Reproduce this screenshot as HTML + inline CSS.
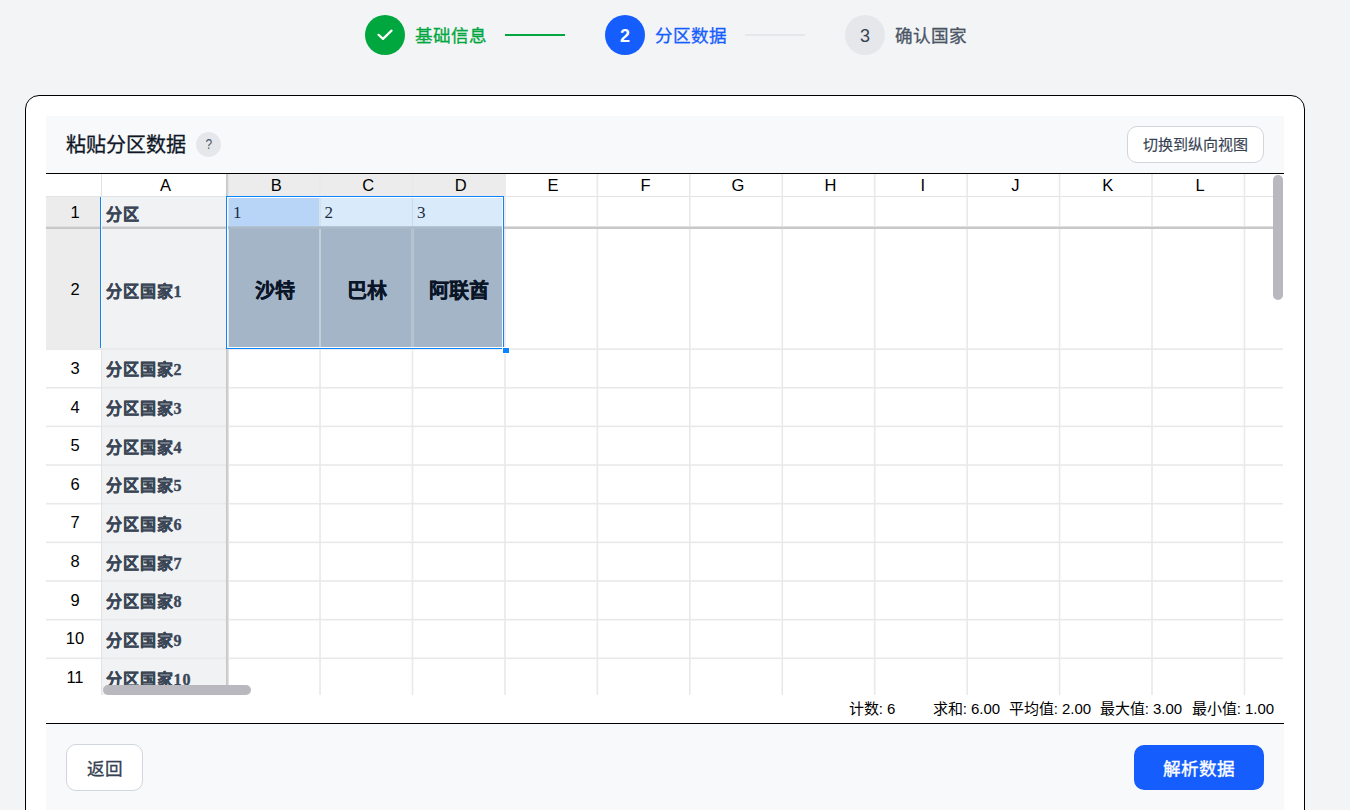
<!DOCTYPE html>
<html lang="zh-CN">
<head>
<meta charset="utf-8">
<style>
*{box-sizing:border-box;margin:0;padding:0}
html,body{width:1350px;height:810px;overflow:hidden;background:#f3f4f6;font-family:"Liberation Sans",sans-serif}
.abs{position:absolute}
.circle{position:absolute;width:40px;height:40px;border-radius:50%;top:15px;display:flex;align-items:center;justify-content:center;font-size:18px;font-weight:bold;padding-top:2px}
.steptxt{position:absolute;top:24px;font-size:17.6px;line-height:24px;white-space:nowrap;-webkit-text-stroke:0.3px currentColor}
.card{position:absolute;left:25px;top:95px;width:1280px;height:760px;border:1px solid #000;border-radius:14px;background:#fff}
.panel{position:absolute;left:46px;top:116px;width:1238px;height:57px;background:#f8f9fa}
.btn{position:absolute;background:#fff;border:1px solid #d1d5dc;border-radius:10px;color:#364153;display:flex;align-items:center;justify-content:center;white-space:nowrap}
.sheettxt{position:absolute;left:0;top:0;width:1350px;height:810px;clip-path:inset(174px 67px 115px 46px)}
.t{position:absolute;white-space:nowrap}
.ch{position:absolute;top:174px;height:22px;font-size:16.5px;line-height:22px;text-align:center;color:#000;padding-left:5px}
.rh{position:absolute;left:48px;width:54px;padding-top:1px;font-size:16.5px;text-align:center;color:#000;display:flex;align-items:center;justify-content:center}
.ca{position:absolute;left:106px;font-family:"Liberation Serif",serif;font-weight:bold;font-size:16px;color:#3a4555;-webkit-text-stroke:0.38px #3a4555;padding-top:2px;letter-spacing:0.9px;white-space:nowrap;display:flex;align-items:center}
.num{position:absolute;font-family:"Liberation Serif",serif;font-size:17px;color:#1a2a40;display:flex;align-items:center;padding-top:2px}
.big{position:absolute;font-family:"Liberation Sans",sans-serif;font-weight:bold;font-size:20px;color:#0a1628;-webkit-text-stroke:0.32px #0a1628;display:flex;align-items:center;justify-content:center}
.st{position:absolute;top:699px;font-size:15px;line-height:20px;color:#000;white-space:nowrap}
</style>
</head>
<body>
<!-- stepper -->
<div class="circle" style="left:365px;background:#00a63e">
<svg width="16" height="16" viewBox="0 0 16 16"><path d="M1.5 6.8 L6 10.9 L14.5 2.6" fill="none" stroke="#fff" stroke-width="2.2" stroke-linecap="round" stroke-linejoin="round"/></svg>
</div>
<div class="steptxt" style="left:415px;color:#00a63e">基础信息</div>
<div class="abs" style="left:505px;top:34px;width:60px;height:2px;background:#00a63e"></div>
<div class="circle" style="left:605px;background:#155dfc;color:#fff">2</div>
<div class="steptxt" style="left:655px;color:#155dfc">分区数据</div>
<div class="abs" style="left:745px;top:34px;width:60px;height:2px;background:#e5e7eb"></div>
<div class="circle" style="left:845px;background:#e5e7eb;color:#364153;font-weight:normal">3</div>
<div class="steptxt" style="left:895px;color:#4a5565">确认国家</div>

<!-- card -->
<div class="card"></div>
<div class="panel"></div>
<div class="abs" style="left:66px;top:132px;font-size:20px;line-height:26px;color:#101828;-webkit-text-stroke:0.3px #101828">粘贴分区数据</div>
<div class="abs" style="left:196px;top:132px;width:25px;height:25px;border-radius:50%;background:#e5e7eb;color:#4a5565;font-size:14px;display:flex;align-items:center;justify-content:center;padding-bottom:2px"><span style="display:inline-block;transform:scaleX(0.85)">?</span></div>
<div class="btn" style="left:1127px;top:126px;width:137px;height:37px;font-size:15px;padding-bottom:2px;-webkit-text-stroke:0.15px currentColor">切换到纵向视图</div>
<div class="abs" style="left:46px;top:173px;width:1238px;height:1px;background:#000"></div>
<svg class="abs" style="left:0;top:0" width="1350" height="810" viewBox="0 0 1350 810">
<defs><clipPath id="gc"><rect x="46" y="174" width="1237" height="521"/></clipPath></defs>
<g clip-path="url(#gc)">
<rect x="46" y="174" width="1238" height="521" fill="#fff"/>
<rect x="46" y="197" width="54" height="151.6" fill="#ececec"/>
<rect x="228" y="174" width="276.44" height="22" fill="#ececec"/>
<rect x="102" y="197" width="124" height="498" fill="#f1f2f4"/>
<rect x="228" y="197" width="91.56" height="29" fill="#b8d5f8"/>
<rect x="319.56" y="197" width="184.88" height="29" fill="#d9eafb"/>
<rect x="228" y="229" width="276.44" height="120" fill="#a4b5c8"/>
<rect x="46" y="196" width="1237" height="1" fill="#e3e3e3"/>
<rect x="46" y="348.30" width="1237" height="1.6" fill="#e9e9e9"/>
<rect x="46" y="386.95" width="1237" height="1.6" fill="#e9e9e9"/>
<rect x="46" y="425.60" width="1237" height="1.6" fill="#e9e9e9"/>
<rect x="46" y="464.25" width="1237" height="1.6" fill="#e9e9e9"/>
<rect x="46" y="502.90" width="1237" height="1.6" fill="#e9e9e9"/>
<rect x="46" y="541.55" width="1237" height="1.6" fill="#e9e9e9"/>
<rect x="46" y="580.20" width="1237" height="1.6" fill="#e9e9e9"/>
<rect x="46" y="618.85" width="1237" height="1.6" fill="#e9e9e9"/>
<rect x="46" y="657.50" width="1237" height="1.6" fill="#e9e9e9"/>
<rect x="101" y="174" width="1" height="521" fill="#e3e3e3"/>
<rect x="319.26" y="174" width="1.6" height="521" fill="#e9e9e9"/>
<rect x="411.70" y="174" width="1.6" height="521" fill="#e9e9e9"/>
<rect x="504.14" y="174" width="1.6" height="521" fill="#e9e9e9"/>
<rect x="596.58" y="174" width="1.6" height="521" fill="#e9e9e9"/>
<rect x="689.02" y="174" width="1.6" height="521" fill="#e9e9e9"/>
<rect x="781.46" y="174" width="1.6" height="521" fill="#e9e9e9"/>
<rect x="873.90" y="174" width="1.6" height="521" fill="#e9e9e9"/>
<rect x="966.34" y="174" width="1.6" height="521" fill="#e9e9e9"/>
<rect x="1058.78" y="174" width="1.6" height="521" fill="#e9e9e9"/>
<rect x="1151.22" y="174" width="1.6" height="521" fill="#e9e9e9"/>
<rect x="1243.66" y="174" width="1.6" height="521" fill="#e9e9e9"/>
<rect x="1336.10" y="174" width="1.6" height="521" fill="#e9e9e9"/>
<rect x="226" y="174" width="1" height="521" fill="#c8c8c8"/>
<rect x="227" y="174" width="1" height="521" fill="#d0d0d0"/>
<rect x="228" y="174" width="1" height="521" fill="#e2e2e2"/>
<rect x="46" y="226" width="1237" height="1" fill="#e0e0e0"/>
<rect x="46" y="227" width="1237" height="2" fill="#c8c8c8"/>
<rect x="228" y="226" width="276.44" height="1" fill="#b4c4d4"/>
<rect x="228" y="227" width="276.44" height="2" fill="#aabac8"/>
<rect x="319.56" y="197" width="1" height="29" fill="#c8d9ec"/>
<rect x="319.56" y="229" width="1" height="119" fill="#b0c0d0"/>
<rect x="412.00" y="197" width="1" height="29" fill="#c8d9ec"/>
<rect x="412.00" y="229" width="1" height="119" fill="#b0c0d0"/>
<rect x="100" y="197" width="1" height="151" fill="#0a84ff"/>
<rect x="101" y="197" width="1" height="151" fill="#fdfaf6"/>
<rect x="226" y="196" width="275" height="150" fill="none" stroke="#fff" stroke-width="1" transform="translate(1.5,1.5)" />
<rect x="226.5" y="196.5" width="277" height="152" fill="none" stroke="#0a84ff" stroke-width="1"/>
<rect x="502" y="347" width="8" height="7" fill="#fff"/>
<rect x="503" y="348" width="6" height="5" fill="#0a84ff"/>
</g>
</svg>
<div class="sheettxt"><div class="ch" style="left:101.0px;width:124.0px">A</div>
<div class="ch" style="left:228.0px;width:91.6px">B</div>
<div class="ch" style="left:319.6px;width:92.4px">C</div>
<div class="ch" style="left:412.0px;width:92.4px">D</div>
<div class="ch" style="left:504.4px;width:92.4px">E</div>
<div class="ch" style="left:596.9px;width:92.4px">F</div>
<div class="ch" style="left:689.3px;width:92.4px">G</div>
<div class="ch" style="left:781.8px;width:92.4px">H</div>
<div class="ch" style="left:874.2px;width:92.4px">I</div>
<div class="ch" style="left:966.6px;width:92.4px">J</div>
<div class="ch" style="left:1059.1px;width:92.4px">K</div>
<div class="ch" style="left:1151.5px;width:92.4px">L</div>
<div class="rh" style="top:197.0px;height:29.0px">1</div>
<div class="rh" style="top:229.0px;height:120.0px">2</div>
<div class="rh" style="top:349.1px;height:37.6px">3</div>
<div class="rh" style="top:387.8px;height:37.7px">4</div>
<div class="rh" style="top:426.4px;height:37.6px">5</div>
<div class="rh" style="top:465.1px;height:37.7px">6</div>
<div class="rh" style="top:503.7px;height:37.6px">7</div>
<div class="rh" style="top:542.4px;height:37.6px">8</div>
<div class="rh" style="top:581.0px;height:37.7px">9</div>
<div class="rh" style="top:619.7px;height:37.6px">10</div>
<div class="rh" style="top:658.3px;height:37.7px">11</div>
<div class="ca" style="top:197.0px;height:29.0px">分区</div>
<div class="ca" style="top:229.0px;height:120.0px">分区国家1</div>
<div class="ca" style="top:348.6px;height:37.6px">分区国家2</div>
<div class="ca" style="top:387.2px;height:37.7px">分区国家3</div>
<div class="ca" style="top:425.9px;height:37.6px">分区国家4</div>
<div class="ca" style="top:464.6px;height:37.7px">分区国家5</div>
<div class="ca" style="top:503.2px;height:37.6px">分区国家6</div>
<div class="ca" style="top:541.9px;height:37.6px">分区国家7</div>
<div class="ca" style="top:580.5px;height:37.7px">分区国家8</div>
<div class="ca" style="top:619.2px;height:37.6px">分区国家9</div>
<div class="ca" style="top:657.8px;height:37.7px">分区国家10</div>
<div class="num" style="left:233.0px;top:197px;height:29px">1</div>
<div class="num" style="left:324.6px;top:197px;height:29px">2</div>
<div class="num" style="left:417.0px;top:197px;height:29px">3</div>
<div class="big" style="left:229.0px;width:91.6px;top:229px;height:120px">沙特</div>
<div class="big" style="left:320.6px;width:92.4px;top:229px;height:120px">巴林</div>
<div class="big" style="left:413.0px;width:92.4px;top:229px;height:120px">阿联酋</div></div>
<svg class="abs" style="left:0;top:0" width="1350" height="810" viewBox="0 0 1350 810"><rect x="1273" y="175" width="10" height="125" rx="5" fill="#b9b8be"/><rect x="103" y="685" width="148" height="10" rx="5" fill="#b9b8be"/></svg>
<!-- status -->
<div class="st" style="left:848.7px">计数: 6</div>
<div class="st" style="left:932.7px">求和: 6.00</div>
<div class="st" style="left:1008.7px">平均值: 2.00</div>
<div class="st" style="left:1099.7px">最大值: 3.00</div>
<div class="st" style="left:1191.7px">最小值: 1.00</div>
<div class="abs" style="left:46px;top:723px;width:1238px;height:1px;background:#000"></div>
<div class="abs" style="left:46px;top:724px;width:1238px;height:86px;background:#f8f9fa"></div>
<div class="btn" style="left:66px;top:744px;width:77px;height:47px;font-size:17.6px;padding-bottom:1px;-webkit-text-stroke:0.3px currentColor">返回</div>
<div class="abs" style="left:1134px;top:745px;width:130px;height:45px;border-radius:10px;background:#155dfc;color:#fff;font-size:17.6px;-webkit-text-stroke:0.4px #fff;padding-bottom:1px;display:flex;align-items:center;justify-content:center">解析数据</div>
</body>
</html>
